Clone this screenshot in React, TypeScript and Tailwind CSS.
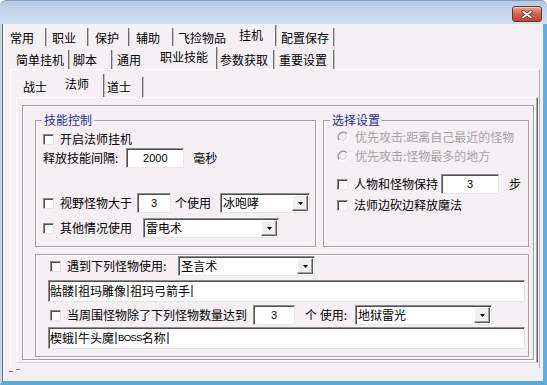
import React from 'react';

const sunken =
  'border border-t-[#8c8c8c] border-l-[#8c8c8c] border-r-[#e6e6e6] border-b-[#e6e6e6] bg-white shadow-[inset_1px_1px_0_#505050]';
const etched = 'border border-[#a0a0a0] shadow-[inset_1px_1px_0_#ffffff,1px_1px_0_#ffffff]';
const num = "font-['Liberation_Sans',sans-serif] text-[11px]";

function Tab({ label, cls, sep = true }: { label: string; cls: string; sep?: boolean }) {
  return (
    <div
      className={`shrink-0 whitespace-nowrap pt-[3px] ${
        sep ? 'border-r border-r-[#6d6d6d] shadow-[1px_0_0_#c4c0c4]' : ''
      } ${cls}`}
    >
      {label}
    </div>
  );
}

function Check() {
  return <span className={`inline-block h-[11px] w-[11px] shrink-0 ${sunken}`} />;
}

function Radio() {
  return (
    <svg width="12" height="12" viewBox="0 0 12 12" className="shrink-0">
      <circle cx="6" cy="6" r="5" fill="#f4f0f4" />
      <path d="M9.9 2.6A5.2 5.2 0 0 0 2.1 9.4" stroke="#8e8e8e" strokeWidth="1.3" fill="none" />
      <path d="M2.1 9.4A5.2 5.2 0 0 0 9.9 2.6" stroke="#ffffff" strokeWidth="1.3" fill="none" />
      <path d="M3.4 8.6A3.7 3.7 0 0 0 8.6 3.4" stroke="#d8d8d8" strokeWidth="1" fill="none" />
    </svg>
  );
}

function Combo({ text, cls }: { text: string; cls: string }) {
  return (
    <div className={`flex h-[20px] shrink-0 items-center ${sunken} ${cls}`}>
      <span className="flex-1 pl-[2px]">{text}</span>
      <span className="mr-px flex h-[16px] w-[16px] items-center justify-center border border-t-white border-l-white border-r-[#5a5a5a] border-b-[#5a5a5a] bg-[#f0f0f0] shadow-[inset_-1px_-1px_0_#a0a0a0]">
        <svg width="5" height="3" viewBox="0 0 5 3">
          <path d="M0 0h5L2.5 3z" fill="#000" />
        </svg>
      </span>
    </div>
  );
}

function Bar() {
  return <span className="mx-px inline-block h-[12px] w-[2px] shrink-0 bg-[#808080]" />;
}

function CloseButton() {
  return (
    <div className="flex h-[16px] w-[30px] items-center justify-center rounded-[3px] border border-[#6e2f28] bg-linear-to-b from-[#eaa99a] via-[#d45f49] to-[#c24831] shadow-[inset_0_1px_0_rgba(255,255,255,0.5)]">
      <svg width="12" height="9" viewBox="0 0 12 9">
        <path d="M2 1.5l8 6M10 1.5l-8 6" stroke="#5a1d16" strokeWidth="3.2" strokeLinecap="round" />
        <path d="M2 1.5l8 6M10 1.5l-8 6" stroke="#ffffff" strokeWidth="1.8" strokeLinecap="round" />
      </svg>
    </div>
  );
}

export default function App() {
  return (
    <div className="flex h-[385px] w-[547px] flex-col overflow-hidden font-['Noto_Sans_CJK_SC',sans-serif] text-[12px] leading-[14px] text-black">
      <div className="flex h-[24px] shrink-0 justify-end rounded-t-[6px] border-t border-[#7f9dbd] bg-linear-to-b from-[#b4cbe6] to-[#d1e1f2] pr-[5px] pt-[5px]">
        <CloseButton />
      </div>

      <div className="flex min-h-0 flex-1 border-b-[4px] border-l-[2px] border-r-[4px] border-b-[#5ba8dc] border-l-[#c7d8e9] border-r-[#63ade0]">
        <div className="flex flex-1 flex-col border-l border-l-[#6f6f6f] bg-[#f4f0f4]">
          <div className="flex h-[22px] shrink-0 items-end pl-px">
            <Tab label="常用" cls="h-[18px] w-[42px] pl-[6px]" />
            <Tab label="职业" cls="h-[18px] w-[42px] pl-[6px]" />
            <Tab label="保护" cls="h-[18px] w-[41px] pl-[7px]" />
            <Tab label="辅助" cls="h-[18px] w-[44px] pl-[7px]" />
            <Tab label="飞捡物品" cls="h-[18px] w-[59px] pl-[5px]" sep={false} />
            <Tab label="挂机" cls="h-[21px] w-[44px] pl-[7px]" />
            <Tab label="配置保存" cls="h-[18px] w-[58px] pl-[5px]" />
          </div>

          <div className="flex h-[23px] shrink-0 items-end pl-[7px]">
            <Tab label="简单挂机" cls="h-[19px] w-[59px] pl-[6px]" />
            <Tab label="脚本" cls="h-[19px] w-[43px] pl-[4px]" />
            <Tab label="通用" cls="h-[19px] w-[41px] pl-[5px]" sep={false} />
            <Tab label="职业技能" cls="h-[22px] w-[64px] pl-[7px]" />
            <Tab label="参数获取" cls="h-[19px] w-[57px] pl-[3px]" />
            <Tab label="重要设置" cls="h-[19px] w-[60px] pl-[5px]" />
          </div>

          <div className="ml-[7px] flex h-[299px] w-[530px] shrink-0 flex-col border-l border-r border-t border-l-white border-r-[#b4b4b4] border-t-white pl-[5px] pr-px">
            <div className="flex h-[27px] shrink-0 items-end">
              <Tab label="战士" cls="h-[20px] w-[42px] pl-[7px]" sep={false} />
              <Tab label="法师" cls="h-[23px] w-[46px] pl-[7px]" />
              <Tab label="道士" cls="h-[20px] w-[39px] pl-[3px]" />
            </div>

            <div className="flex h-[266px] w-[522px] shrink-0 flex-col border border-b-[#d8d4d8] border-l-white border-r-[#6a6a6a] border-t-white pl-[5px] pr-[3px] pt-[7px] shadow-[inset_-1px_0_0_#a8a8a8]">
              <div className={`flex h-[255px] w-[512px] shrink-0 flex-col pl-[12px] pr-[4px] pt-[7px] ${etched}`}>
                <div className="flex gap-[7px]">
                  <fieldset className={`h-[134px] w-[281px] shrink-0 ${etched}`}>
                    <legend className="ml-[6px] bg-[#f4f0f4] px-[2px] text-[#1f2f9a]">技能控制</legend>
                    <div className="pl-[7px]">
                      <div className="mt-[5px] flex h-[14px] items-center">
                        <Check />
                        <span className="ml-[6px]">开启法师挂机</span>
                      </div>
                      <div className="mt-[2px] flex h-[20px] items-center">
                        <span>释放技能间隔:</span>
                        <div className={`ml-[8px] flex h-[20px] w-[58px] items-center justify-center ${num} ${sunken}`}>
                          2000
                        </div>
                        <span className="ml-[9px]">毫秒</span>
                      </div>
                      <div className="mt-[25px] flex h-[20px] items-center">
                        <Check />
                        <span className="ml-[6px]">视野怪物大于</span>
                        <div className={`ml-[5px] flex h-[20px] w-[34px] items-center justify-center ${num} ${sunken}`}>
                          3
                        </div>
                        <span className="ml-[4px]">个使用</span>
                        <Combo text="冰咆哮" cls="ml-[9px] w-[90px]" />
                      </div>
                      <div className="mt-[5px] flex h-[20px] items-center">
                        <Check />
                        <span className="ml-[6px]">其他情况使用</span>
                        <Combo text="雷电术" cls="ml-[11px] w-[136px]" />
                      </div>
                    </div>
                  </fieldset>

                  <fieldset className={`h-[134px] w-[206px] shrink-0 ${etched}`}>
                    <legend className="ml-[6px] bg-[#f4f0f4] px-[2px] text-[#1f2f9a]">选择设置</legend>
                    <div className="pl-[13px]">
                      <div className="mt-[3px] flex h-[14px] items-center text-[#a3a3a3]">
                        <Radio />
                        <span className="ml-[6px] whitespace-nowrap">优先攻击:距离自己最近的怪物</span>
                      </div>
                      <div className="mt-[5px] flex h-[14px] items-center text-[#a3a3a3]">
                        <Radio />
                        <span className="ml-[6px] whitespace-nowrap">优先攻击:怪物最多的地方</span>
                      </div>
                      <div className="mt-[11px] flex h-[20px] items-center">
                        <Check />
                        <span className="ml-[6px]">人物和怪物保持</span>
                        <div className={`ml-[3px] flex h-[20px] w-[58px] items-center justify-center ${num} ${sunken}`}>
                          3
                        </div>
                        <span className="ml-[10px]">步</span>
                      </div>
                      <div className="mt-[4px] flex h-[14px] items-center">
                        <Check />
                        <span className="ml-[6px]">法师边砍边释放魔法</span>
                      </div>
                    </div>
                  </fieldset>
                </div>

                <div className={`mt-[7px] h-[103px] w-[494px] shrink-0 pl-[12px] ${etched}`}>
                  <div className="mt-px flex h-[20px] items-center">
                    <span className="ml-[2px] flex">
                      <Check />
                    </span>
                    <span className="ml-[6px]">遇到下列怪物使用:</span>
                    <Combo text="圣言术" cls="ml-[12px] w-[137px]" />
                  </div>
                  <div className={`mt-[4px] flex h-[22px] w-[477px] items-center pl-px ${sunken}`}>
                    骷髅
                    <Bar />
                    祖玛雕像
                    <Bar />
                    祖玛弓箭手
                    <Bar />
                  </div>
                  <div className="mt-[3px] flex h-[20px] items-center">
                    <span className="ml-[2px] flex">
                      <Check />
                    </span>
                    <span className="ml-[6px]">当周围怪物除了下列怪物数量达到</span>
                    <div className={`ml-[6px] flex h-[20px] w-[42px] items-center justify-center ${num} ${sunken}`}>
                      3
                    </div>
                    <span className="ml-[10px] whitespace-pre">个 使用:</span>
                    <Combo text="地狱雷光" cls="ml-[8px] w-[137px]" />
                  </div>
                  <div className={`mt-[2px] flex h-[22px] w-[477px] items-center pl-px ${sunken}`}>
                    楔蛾
                    <Bar />
                    牛头魔
                    <Bar />
                    <span className="font-['Liberation_Sans',sans-serif] text-[9.5px] tracking-[-0.7px]">BOSS</span>
                    名称
                    <Bar />
                  </div>
                </div>
              </div>
            </div>
          </div>

          <div className="flex items-start pl-[6px]">
            <span className="mt-[3px] h-px w-[4px] bg-[#7a7a7a]" />
            <span className="ml-[3px] mt-px h-px w-[4px] bg-[#7a7a7a]" />
          </div>
        </div>
      </div>
    </div>
  );
}
